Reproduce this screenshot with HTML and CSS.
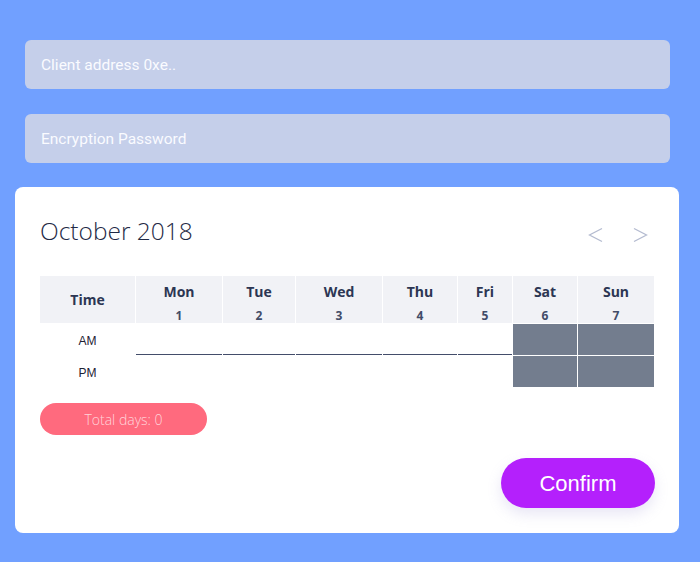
FILE: index.html
```html
<!DOCTYPE html>
<html lang="en">
<head>
<meta charset="utf-8">
<title>Schedule</title>
<link rel="stylesheet" href="styles.css">
</head>
<body>
<div class="page">
  <div class="field"><span class="placeholder">Client address 0xe..</span></div>
  <div class="field"><span class="placeholder">Encryption Password</span></div>

  <div class="card">
    <div class="card-head">
      <h1 class="month">October 2018</h1>
      <div class="nav">
        <svg class="arrow" width="16" height="16" viewBox="0 0 16 16"><polyline points="14,1.5 1.5,8 14,14.5" /></svg>
        <svg class="arrow" width="16" height="16" viewBox="0 0 16 16"><polyline points="2,1.5 14.5,8 2,14.5" /></svg>
      </div>
    </div>

    <div class="grid">
      <div class="hcell time-head">Time</div>
      <div class="hcell"><span class="dname">Mon</span><span class="dnum">1</span></div>
      <div class="hcell"><span class="dname">Tue</span><span class="dnum">2</span></div>
      <div class="hcell"><span class="dname">Wed</span><span class="dnum">3</span></div>
      <div class="hcell"><span class="dname">Thu</span><span class="dnum">4</span></div>
      <div class="hcell"><span class="dname">Fri</span><span class="dnum">5</span></div>
      <div class="hcell"><span class="dname">Sat</span><span class="dnum">6</span></div>
      <div class="hcell"><span class="dname">Sun</span><span class="dnum">7</span></div>

      <div class="tcell">AM</div>
      <div class="slot am"></div>
      <div class="slot am"></div>
      <div class="slot am"></div>
      <div class="slot am"></div>
      <div class="slot am"></div>
      <div class="slot off"></div>
      <div class="slot off"></div>

      <div class="tcell">PM</div>
      <div class="slot"></div>
      <div class="slot"></div>
      <div class="slot"></div>
      <div class="slot"></div>
      <div class="slot"></div>
      <div class="slot off"></div>
      <div class="slot off"></div>
    </div>

    <div class="total">Total days: 0</div>

    <div class="actions">
      <button class="confirm">Confirm</button>
    </div>
  </div>
</div>
</body>
</html>
```
FILE: styles.css
```css
* { box-sizing: border-box; }
html, body { margin: 0; padding: 0; }
body {
  background: #71a0ff;
  width: 700px;
  height: 562px;
  overflow: hidden;
  font-family: "Open Sans", "DejaVu Sans", sans-serif;
}
.page {
  padding: 40px 21px 29px 15px;
}
.field {
  height: 49px;
  margin: 0 9px 25px 10px;
  background: #c5cfea;
  border-radius: 6px;
  display: flex;
  align-items: center;
  padding-left: 16px;
}
.field + .field { margin-bottom: 24px; }
.placeholder {
  font-family: Roboto, "Liberation Sans", sans-serif;
  font-size: 15.5px;
  color: #fafbff;
}
.card {
  background: #ffffff;
  border-radius: 8px;
  height: 346px;
  padding: 26px 25px 25px 25px;
  display: flex;
  flex-direction: column;
}
.card-head {
  display: flex;
  justify-content: space-between;
  align-items: flex-start;
  height: 36px;
  margin-bottom: 27px;
}
.month {
  margin: 0;
  font-size: 24.5px;
  line-height: 36px;
  font-weight: 300;
  color: #1f2a46;
}
.nav {
  display: flex;
  gap: 28px;
  padding-top: 14px;
  padding-right: 6px;
}
.arrow polyline {
  fill: none;
  stroke: #b4bbd0;
  stroke-width: 1.3;
}
.grid {
  display: grid;
  grid-template-columns: 95px 86px 72px 86px 74px 54px 64px 76px;
  grid-template-rows: 47px 31px 31px;
  gap: 1px;
}
.hcell {
  background: #f1f2f6;
  display: flex;
  flex-direction: column;
  align-items: center;
  padding-top: 7px;
  color: #2c3653;
  font-weight: 700;
}
.dname {
  font-size: 14px;
  line-height: 18px;
}
.dnum {
  font-size: 12px;
  line-height: 16px;
  margin-top: 7px;
  color: #424c68;
}
.time-head {
  justify-content: center;
  padding-top: 0;
  font-size: 14px;
}
.tcell {
  display: flex;
  align-items: center;
  justify-content: center;
  padding-top: 2px;
  font-family: "Liberation Sans", Arial, sans-serif;
  font-size: 12px;
  color: #1d2233;
}
.slot.am { border-bottom: 1px solid #434d6a; }
.slot.off { background: #737d8e; }
.total {
  margin-top: 16px;
  width: 167px;
  height: 32px;
  border-radius: 16px;
  background: #ff6a7e;
  color: rgba(255, 255, 255, 0.72);
  font-size: 14px;
  font-weight: 300;
  display: flex;
  align-items: center;
  justify-content: center;
}
.actions {
  margin-top: 23px;
  margin-right: -1px;
  display: flex;
  justify-content: flex-end;
}
.confirm {
  width: 154px;
  height: 50px;
  border: none;
  border-radius: 25px;
  background: #b420fc;
  color: #ffffff;
  font-family: "Liberation Sans", Arial, sans-serif;
  font-size: 22px;
  padding: 2px 0 0 0;
  box-shadow: 0 6px 14px rgba(150, 140, 210, 0.22);
}
```
